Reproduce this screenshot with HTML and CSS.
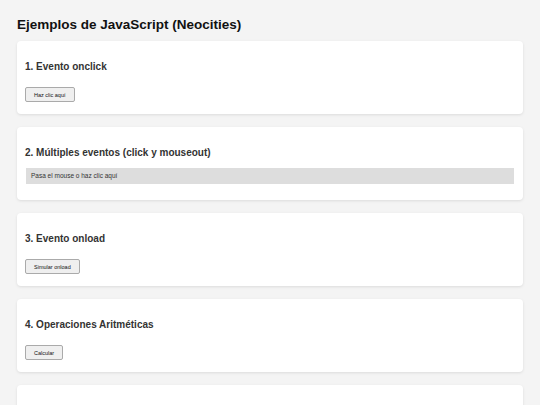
FILE: index.html
```html
<!DOCTYPE html>
<html lang="es">
<head>
    <meta charset="UTF-8">
    <meta name="viewport" content="width=device-width, initial-scale=1.0">
    <title>Ejemplos de JavaScript</title>
    <link rel="stylesheet" href="styles.css">
</head>
<body>
    <h1>Ejemplos de JavaScript (Neocities)</h1>

    <div class="section">
        <h2>1. Evento onclick</h2>
        <button class="btn">Haz clic aquí</button>
    </div>

    <div class="section">
        <h2>2. Múltiples eventos (click y mouseout)</h2>
        <div class="hover-box">Pasa el mouse o haz clic aquí</div>
    </div>

    <div class="section">
        <h2>3. Evento onload</h2>
        <button class="btn">Simular onload</button>
    </div>

    <div class="section">
        <h2>4. Operaciones Aritméticas</h2>
        <button class="btn">Calcular</button>
    </div>

    <div class="section">
        <h2>5. Condicionales</h2>
        <button class="btn">Comprobar</button>
    </div>
</body>
</html>
```

FILE: styles.css
```css
body {
    font-family: "Liberation Sans", Arial, sans-serif;
    margin: 0;
    padding: 17px;
    background-color: #f4f4f4;
    color: #333;
}
h1 {
    font-size: 13.5px;
    line-height: 16px;
    margin: 0 0 8px;
    color: #111;
}
.section {
    background: white;
    padding: 8px;
    margin-bottom: 13px;
    border-radius: 4px;
    box-shadow: 0 1px 3px rgba(0, 0, 0, 0.1);
}
.section h2 {
    font-size: 10px;
    line-height: 12px;
    margin: 12px 0 0;
    color: #333;
}
.btn {
    display: block;
    box-sizing: border-box;
    font-family: "Liberation Sans", Arial, sans-serif;
    font-size: 5.5px;
    height: 15px;
    padding: 0 8px;
    margin: 14px 0 4px;
    background: #efefef;
    color: #111;
    border: 1px solid #aaa;
    border-radius: 2px;
    cursor: pointer;
}
.btn:hover {
    background: #e5e5e5;
}
.hover-box {
    background: #ddd;
    font-size: 6.5px;
    line-height: 16px;
    height: 16px;
    padding: 0 5px;
    margin: 9px 1px 8px;
    cursor: pointer;
}
```
